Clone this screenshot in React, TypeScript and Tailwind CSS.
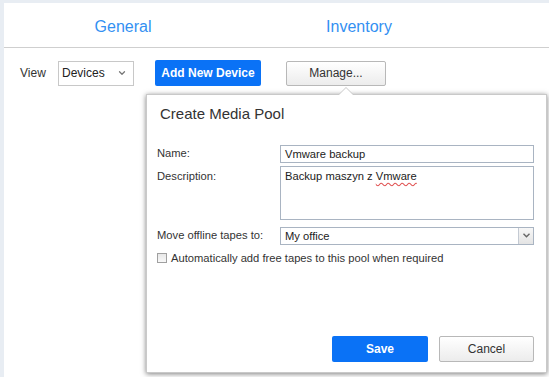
import { ChevronDown } from "lucide-react";

const font = { fontFamily: "'Liberation Sans', Arial, sans-serif" };

function SmallArrow() {
  return (
    <svg width="7" height="5" viewBox="0 0 7 5">
      <path d="M0.5 0.8 L3.5 3.8 L6.5 0.8" fill="none" stroke="#666" strokeWidth="1.4" />
    </svg>
  );
}

function MediaPoolDialog() {
  const label = "text-[11.2px] text-[#333]";
  const field = "border border-[#a9b4c2] bg-white text-[11.2px] text-[#222] px-[4px]";
  return (
    <div className="absolute left-[142px] top-[91px] w-[401px] h-[279px] bg-white border border-[#c9c9c9] shadow-[0_1px_5px_rgba(0,0,0,0.5)]">
      {/* arrow pointing to Manage */}
      <div className="absolute left-[191px] top-[-8px] w-0 h-0 border-l-[8px] border-r-[8px] border-b-[8px] border-l-transparent border-r-transparent border-b-[#c9c9c9]" />
      <div className="absolute left-[192px] top-[-7px] w-0 h-0 border-l-[7px] border-r-[7px] border-b-[7px] border-l-transparent border-r-transparent border-b-white" />

      <div className="pl-[13px] pt-[8px] text-[15px] text-[#333]">Create Media Pool</div>

      <div className="mt-[19px] pl-[10px] pr-[12px] flex flex-col">
        <div className="flex items-center h-[18px]">
          <span className={`${label} w-[123px]`}>Name:</span>
          <div className={`${field} flex-1 h-[18px] leading-[16px]`}>Vmware backup</div>
        </div>
        <div className="flex items-start mt-[3px]">
          <span className={`${label} w-[123px] pt-[2px]`}>Description:</span>
          <div className={`${field} flex-1 h-[54px] leading-[16px] pt-[1px]`}>
            Backup maszyn z{" "}
            <span className="underline decoration-wavy decoration-[#e05050] underline-offset-2">Vmware</span>
          </div>
        </div>
        <div className="flex items-center mt-[7px] h-[18px]">
          <span className={`${label} w-[123px]`}>Move offline tapes to:</span>
          <div className="flex-1 h-[18px] border border-[#a9b4c2] flex">
            <div className="flex-1 text-[11.2px] text-[#222] px-[4px] leading-[16px]">My office</div>
            <div className="w-[15px] border-l border-[#c4cad3] bg-gradient-to-b from-[#f7f7f7] to-[#e4e4e4] flex items-center justify-center">
              <SmallArrow />
            </div>
          </div>
        </div>
        <label className="flex items-center mt-[5px] gap-[4px]">
          <span className="w-[10px] h-[10px] border border-[#a0a0a0] bg-gradient-to-b from-[#e8e8e8] to-[#f8f8f8]" />
          <span className={label}>Automatically add free tapes to this pool when required</span>
        </label>
      </div>

      <div className="absolute right-[12px] bottom-[10px] flex gap-[11px]">
        <button className="w-[96px] h-[26px] rounded-[2px] bg-[#0a72f6] text-white text-[12px] font-bold">Save</button>
        <button className="w-[95px] h-[26px] rounded-[2px] border border-[#b8b8b8] bg-gradient-to-b from-white to-[#ececec] text-[12px] text-[#333]">
          Cancel
        </button>
      </div>
    </div>
  );
}

export default function App() {
  return (
    <div className="w-[549px] h-[377px] bg-[#e8edf3] pt-[3px] pl-[4px] overflow-hidden" style={font}>
      <div className="relative h-full bg-white">
        <div className="flex h-[45px] pt-[3px] border-b border-[#cfcfcf]">
          <div className="w-[238px] flex items-center justify-center text-[16px] text-[#3390f2]">General</div>
          <div className="w-[234px] flex items-center justify-center text-[16px] text-[#3390f2]">Inventory</div>
        </div>

        <div className="flex items-center pl-[16px] pt-[12px]">
          <span className="text-[12px] text-[#333] w-[38px]">View</span>
          <div className="w-[76px] h-[25px] border border-[#c8c8c8] flex items-center justify-between pl-[3px] pr-[6px] text-[12px] text-[#222]">
            Devices
            <ChevronDown size={10} strokeWidth={3} color="#777" />
          </div>
          <button className="ml-[21px] w-[106px] h-[26px] rounded-[2px] bg-[#0a72f6] text-white text-[12px] font-bold whitespace-nowrap">
            Add New Device
          </button>
          <button className="ml-[25px] w-[100px] h-[25px] rounded-[2px] border border-[#b8b8b8] bg-gradient-to-b from-white to-[#ececec] text-[12px] text-[#333]">
            Manage...
          </button>
        </div>

        <MediaPoolDialog />
      </div>
    </div>
  );
}
